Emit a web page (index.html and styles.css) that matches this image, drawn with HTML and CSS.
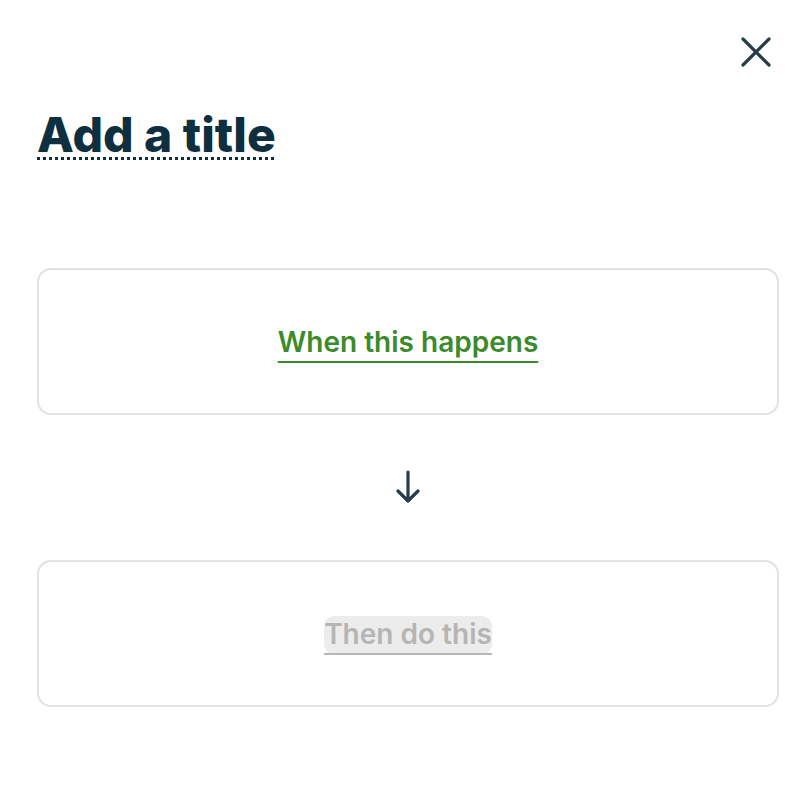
FILE: index.html
```html
<!DOCTYPE html>
<html lang="en">
<head>
    <meta charset="UTF-8">
    <meta name="viewport" content="width=device-width, initial-scale=1.0">
    <title>Add a title</title>
    <link rel="stylesheet" href="styles.css">
</head>
<body>
    <div class="panel">
        <div class="top-bar">
            <button class="close-btn" aria-label="Close">
                <svg width="32" height="32" viewBox="0 0 32 32" fill="none" stroke="#263c48" stroke-width="3.2" stroke-linecap="round">
                    <path d="M3 3 L29 29 M29 3 L3 29"/>
                </svg>
            </button>
        </div>

        <h1 class="flow-title">Add a title</h1>

        <div class="steps">
            <div class="step-card">
                <span class="step-link trigger">When this happens</span>
            </div>

            <div class="step-arrow">
                <svg width="24" height="34" viewBox="0 0 24 34" fill="none" stroke="#263c48" stroke-width="3.2" stroke-linecap="round" stroke-linejoin="round">
                    <path d="M12 2 L12 31 M2 21 L12 31 L22 21"/>
                </svg>
            </div>

            <div class="step-card">
                <span class="step-link action disabled">Then do this</span>
            </div>
        </div>
    </div>
</body>
</html>
```

FILE: styles.css
```css
* {
    margin: 0;
    padding: 0;
    box-sizing: border-box;
}

body {
    background: #fff;
    font-family: Inter, 'Noto Sans', sans-serif;
    color: #0d2f3f;
}

.panel {
    padding: 36px 26px 40px 37px;
}

.top-bar {
    display: flex;
    justify-content: flex-end;
    padding-right: 7px;
}

.close-btn {
    background: none;
    border: none;
    cursor: pointer;
    width: 32px;
    height: 32px;
}

.close-btn svg {
    display: block;
}

.flow-title {
    margin-top: 38px;
    font-size: 48px;
    font-weight: 800;
    line-height: 1.2;
    color: #0d2f3f;
    display: inline-block;
    text-decoration: underline dotted #0d2f3f;
    text-decoration-thickness: 3px;
    text-underline-offset: 5px;
}

.steps {
    margin-top: 104px;
    display: flex;
    flex-direction: column;
}

.step-card {
    height: 147px;
    padding-top: 4px;
    border: 2px solid #e2e2e2;
    border-radius: 14px;
    display: flex;
    align-items: center;
    justify-content: center;
}

.step-link {
    font-size: 28px;
    font-weight: 600;
    line-height: 1.35;
    text-decoration: underline;
    text-decoration-thickness: 2px;
    text-underline-offset: 9px;
}

.trigger {
    color: #3b8a2c;
}

.action.disabled {
    color: #b5b5b5;
    background: #ececec;
    border-radius: 10px;
}

.step-arrow {
    height: 145px;
    display: flex;
    align-items: center;
    justify-content: center;
}
```
